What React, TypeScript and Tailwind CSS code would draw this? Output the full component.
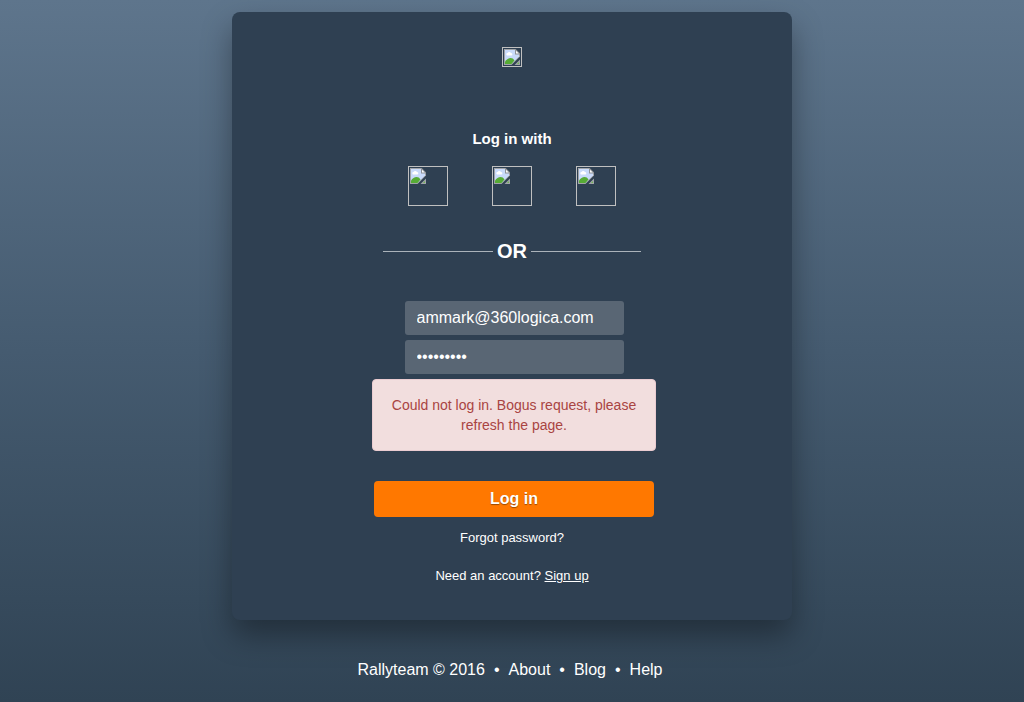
import { useState } from "react";

const providers = ["Facebook", "Google", "LinkedIn"];
const footerLinks = ["About", "Blog", "Help"];

function MissingImageIcon() {
  return (
    <svg className="size-4" viewBox="0 0 16 16" aria-hidden="true">
      <path d="M0 0h11.500L16 4.500V7.500L7.500 16H0z" fill="#a1a4a8" />
      <path d="M1 1h10l4 4v2.500L7.500 15H1z" fill="#c9dafa" />
      <path d="M3 6.500A1.500 1.500 0 0 1 3 4h.5a2 2 0 0 1 3.500 0 1.300 1.300 0 0 1 .5 2.500z" fill="#fff" />
      <path d="M1 15v-2.500C2.500 10.500 4.500 9 6.500 9c1.700 0 3 .8 4 2.500L7.500 15z" fill="#56ab35" />
      <path d="M11 0h.5L16 4.500V5.500h-5z" fill="#8f9296" />
      <path d="M12 1.700L14.800 4.500H12z" fill="#fff" />
      <path d="M16 10.500V16h-5.500z" fill="#a1a4a8" />
      <path d="M15 13v2h-2z" fill="#6fb553" />
    </svg>
  );
}

export default function App() {
  const [email, setEmail] = useState("ammark@360logica.com");
  const [password, setPassword] = useState("password1");
  const field =
    "h-[34px] w-[219px] rounded-[3px] bg-[#596674] px-3 text-base text-white outline-none";

  return (
    <div className="flex min-h-screen flex-col items-center bg-linear-to-b from-[#5e758c] via-[#455b70] to-[#304354] px-4 pt-3 font-['Liberation_Sans',Arial,sans-serif] text-white">
      <main className="flex w-full max-w-[560px] flex-col items-center rounded-lg bg-[#2f4052] px-4 pt-[35px] pb-[34px] shadow-[0_15px_30px_rgba(0,0,0,0.35)]">
        <div role="img" aria-label="Rallyteam" className="size-5 border border-[#c0c0c0] p-px">
          <MissingImageIcon />
        </div>

        <h1 className="mt-[62px] text-[15px] leading-5 font-bold">Log in with</h1>
        <div className="mt-[17px] flex gap-11">
          {providers.map((name) => (
            <button key={name} type="button" aria-label={name} className="size-10 border border-[#c0c0c0] p-px">
              <span className="flex h-full items-start">
                <MissingImageIcon />
              </span>
            </button>
          ))}
        </div>

        <div className="mt-[30px] flex w-full max-w-[258px] items-center gap-1">
          <span className="h-px flex-1 bg-[#abb3ba]" />
          <span className="text-xl leading-[30px] font-bold">OR</span>
          <span className="h-px flex-1 bg-[#abb3ba]" />
        </div>

        <form className="mt-[35px] flex w-full flex-col items-center pl-1" onSubmit={(e) => e.preventDefault()}>
          <div className="flex flex-col gap-[5px]">
            <input
              type="email"
              aria-label="Email"
              className={field}
              value={email}
              onChange={(e) => setEmail(e.target.value)}
            />
            <input
              type="password"
              aria-label="Password"
              className={field}
              value={password}
              onChange={(e) => setPassword(e.target.value)}
            />
          </div>
          <p
            role="alert"
            className="mt-[5px] w-full max-w-[284px] rounded-sm border border-[#ebccd1] bg-[#f2dede] px-[15px] py-[15px] text-center text-sm leading-5 text-[#a94442]"
          >
            Could not log in. Bogus request, please refresh the page.
          </p>
          <button
            type="submit"
            className="mt-[30px] h-9 w-full max-w-[280px] rounded-sm bg-[#ff7800] text-base font-bold text-shadow-[0_1px_1px_rgba(0,0,0,0.4)]"
          >
            Log in
          </button>
        </form>

        <a href="#forgot" className="mt-[11px] text-[13px] leading-5">
          Forgot password?
        </a>
        <p className="mt-[18px] text-[13px] leading-5">
          Need an account?{" "}
          <a href="#signup" className="underline">
            Sign up
          </a>
        </p>
      </main>

      <footer className="mt-[38px] flex gap-[9px] pr-1 text-base leading-6">
        <span>Rallyteam © 2016</span>
        {footerLinks.map((label) => (
          <span key={label} className="flex gap-[9px]">
            <span aria-hidden="true">•</span>
            <a href={`#${label.toLowerCase()}`}>{label}</a>
          </span>
        ))}
      </footer>
    </div>
  );
}
